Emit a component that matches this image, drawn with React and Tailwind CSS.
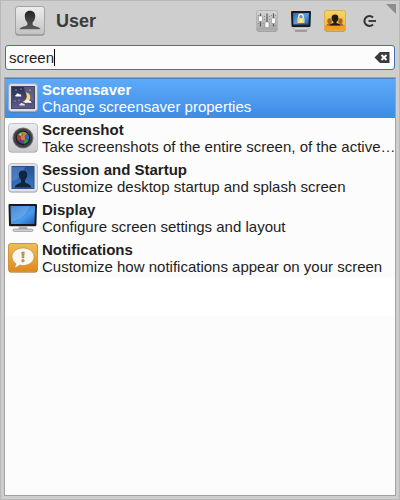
import React, { useState } from 'react';

function UserIcon() {
  return (
    <svg viewBox="0 0 30 30" className="w-[30px] h-[30px]">
      <defs>
        <linearGradient id="userPlate" x1="0" y1="0" x2="0" y2="1">
          <stop offset="0" stopColor="#eeeeee" />
          <stop offset="1" stopColor="#c2c2c2" />
        </linearGradient>
        <linearGradient id="userHead" x1="0" y1="0" x2="0" y2="1">
          <stop offset="0" stopColor="#252525" />
          <stop offset="1" stopColor="#5a5a5a" />
        </linearGradient>
      </defs>
      <rect x="0.5" y="1" width="29" height="28.5" rx="2.5" fill="#707070" />
      <rect x="0.5" y="0.5" width="29" height="28" rx="2.5" fill="url(#userPlate)" stroke="#a2a2a2" />
      <path d="M15 4.800c-3.600 0-5.400 2.300-5.200 5.800.1 2.500 1 4.600 2.600 5.900v2.200c-.5 1.800-6.900 1.600-7.900 4.500h21c-1-2.900-7.400-2.700-7.900-4.500v-2.200c1.600-1.300 2.500-3.400 2.600-5.900C20.400 7.100 18.600 4.800 15 4.800z" fill="url(#userHead)" />
    </svg>
  );
}

function SettingsIcon() {
  return (
    <svg viewBox="0 0 22 22" className="w-[22px] h-[22px]">
      <defs>
        <linearGradient id="mixPlate" x1="0" y1="0" x2="0" y2="1">
          <stop offset="0" stopColor="#d6d6d6" />
          <stop offset="1" stopColor="#a6a6a6" />
        </linearGradient>
      </defs>
      <rect x="0.5" y="1" width="21" height="20.5" rx="2" fill="#777" />
      <rect x="0.5" y="0.5" width="21" height="20" rx="2" fill="url(#mixPlate)" stroke="#b4b4b4" />
      <path d="M4.500 3.500v13M11 3.500v13M17.500 3.500v13" stroke="#5c5c5c" strokeWidth="1.200" />
      <path d="M2 5.500h1M2 13.500h1M6.500 13.500h1M8 6.500h1M13 6.500h1M8 9.500h1M13 9.500h1M15 5.500h1M19 5.500h1M19 15.500h1" stroke="#8a8a8a" />
      <g fill="#fff" stroke="#777" strokeWidth="0.5">
        <rect x="2.500" y="6" width="4" height="5.500" rx="1" />
        <rect x="9" y="12" width="4" height="5.500" rx="1" />
        <rect x="15.500" y="8" width="4" height="5.500" rx="1" />
      </g>
    </svg>
  );
}

function LockIcon() {
  return (
    <svg viewBox="0 0 22 22" className="w-[22px] h-[22px]">
      <defs>
        <linearGradient id="lockScreen" x1="0" y1="0" x2="1" y2="1">
          <stop offset="0" stopColor="#2467bb" />
          <stop offset="0.5" stopColor="#5a9fe6" />
          <stop offset="1" stopColor="#1b58aa" />
        </linearGradient>
      </defs>
      <path d="M2 1h18a1 1 0 0 1 1 1l-.5 14a1 1 0 0 1-1 1h-17a1 1 0 0 1-1-1L1 2a1 1 0 0 1 1-1z" fill="#191c20" />
      <path d="M3 3h16l-.4 11.500H3.400z" fill="url(#lockScreen)" />
      <path d="M8.700 8.500V6.500a2.300 2.300 0 0 1 4.600 0v2" fill="none" stroke="#ececec" strokeWidth="1.400" />
      <rect x="7.500" y="8" width="7" height="5" rx="0.5" fill="#f3d484" />
      <path d="M11 9.500V12" stroke="#fffbe8" strokeWidth="1.500" />
      <rect x="3.500" y="17.800" width="15" height="1.500" rx="0.5" fill="#f2f2f2" stroke="#888" strokeWidth="0.5" />
      <path d="M5 21h12" stroke="#6a6a6a" />
    </svg>
  );
}

function SwitchUserIcon() {
  return (
    <svg viewBox="0 0 22 22" className="w-[22px] h-[22px]">
      <defs>
        <linearGradient id="switchPlate" x1="0" y1="0" x2="0" y2="1">
          <stop offset="0" stopColor="#f9d467" />
          <stop offset="0.7" stopColor="#f2bc4a" />
          <stop offset="0.75" stopColor="#f39a1b" />
          <stop offset="1" stopColor="#f4a52c" />
        </linearGradient>
      </defs>
      <rect x="0.5" y="1" width="21" height="20.5" rx="2" fill="#a46f1d" />
      <rect x="0.5" y="0.5" width="21" height="20" rx="2" fill="url(#switchPlate)" stroke="#dcae55" />
      <g fill="#a5671f">
        <ellipse cx="5.5" cy="11" rx="2.2" ry="2.700" />
        <ellipse cx="16.5" cy="11" rx="2.2" ry="2.700" />
        <path d="M2.500 15.500c.4-1.800 1.700-2.200 3-2.200h11c1.300 0 2.600.4 3 2.200z" />
      </g>
      <path d="M11 4.500c-2.400 0-3.600 1.500-3.400 3.700.1 1.600.8 2.900 1.900 3.700v1c-.4 1-3.700.8-4.300 2.600h11.600c-.6-1.800-3.900-1.600-4.300-2.600v-1c1.100-.8 1.800-2.100 1.900-3.700.2-2.200-1-3.700-3.400-3.700z" fill="#241a12" />
    </svg>
  );
}

function LogoutIcon() {
  return (
    <svg viewBox="0 0 22 22" className="w-[22px] h-[22px]" fill="none" stroke="#333">
      <path d="M15 7.500a5 5 0 1 0 0 7" strokeWidth="2" />
      <path d="M10.500 11H18" strokeWidth="1.800" />
    </svg>
  );
}

function ScreensaverIcon() {
  return (
    <svg viewBox="0 0 30 30" className="w-[30px] h-[30px]">
      <defs>
        <linearGradient id="nightSky" x1="0" y1="0" x2="0" y2="1">
          <stop offset="0" stopColor="#2b2b52" />
          <stop offset="1" stopColor="#5f5c8c" />
        </linearGradient>
      </defs>
      <rect x="0.5" y="1" width="29" height="28.5" rx="3" fill="#68727f" />
      <rect x="0.5" y="0.5" width="29" height="28" rx="3" fill="#dcdee4" stroke="#9ba9ba" />
      <rect x="3.500" y="3.500" width="23" height="22" fill="url(#nightSky)" stroke="#4a4a62" />
      <path d="M16 4h10v14c-6-1-9-6-10-14z" fill="#8f8cae" opacity="0.45" />
      <path d="M18 9.500c3.500.5 5 3.500 4 6.500-1 3.200-5 4.500-7.500 2.500 3.500-.5 5.500-4.500 3.500-9z" fill="#f4dc75" />
      <g fill="#fff">
        <path d="M8 13.500c-1.200 0-1.200-1.600.2-1.600.3-1.700 2.500-1.900 3-.5 1.400-.3 2 .6 1.700 1.100 1 .2.800 1-.1 1z" />
        <path d="M17.500 19.800c-1.200 0-1.200-1.700.3-1.700.4-1.700 2.800-1.900 3.300-.4 1.500-.3 2.200.6 1.900 1.100 1 .2.800 1-.1 1z" />
        <path d="M12 22.500c-1 0-1-1.400.2-1.400.3-1.400 2.300-1.600 2.800-.4 1.300-.2 1.900.6 1.600 1 .8.200.6.800-.1.800z" opacity="0.85" />
        <circle cx="8" cy="7" r="0.6" />
        <circle cx="13" cy="6" r="0.5" />
        <circle cx="22" cy="7" r="0.6" />
        <circle cx="7" cy="18" r="0.5" />
        <circle cx="11" cy="17" r="0.5" />
      </g>
    </svg>
  );
}

function ScreenshotIcon() {
  return (
    <svg viewBox="0 0 30 30" className="w-[30px] h-[30px]">
      <defs>
        <linearGradient id="cameraPlate" x1="0" y1="0" x2="0" y2="1">
          <stop offset="0" stopColor="#ececef" />
          <stop offset="1" stopColor="#cbcad0" />
        </linearGradient>
      </defs>
      <rect x="0.5" y="1" width="29" height="28.5" rx="3" fill="#918f96" />
      <rect x="0.5" y="0.5" width="29" height="28" rx="3" fill="url(#cameraPlate)" stroke="#c4c3c8" />
      <circle cx="15" cy="15" r="10.5" fill="#77777a" />
      <circle cx="15" cy="15" r="9.5" fill="#3e3f42" />
      <circle cx="15" cy="15" r="7.2" fill="#1c1d22" />
      <path d="M15 15L9.500 12a6 6 0 0 1 4.500-3.200z" fill="#6b9a50" />
      <path d="M15 15l-1-6.200a6 6 0 0 1 5.500 1.900z" fill="#b8893a" />
      <path d="M15 15l4.500-4.300a6 6 0 0 1 1.300 6z" fill="#3566c0" />
      <path d="M15 15l5.800 1.700a6 6 0 0 1-5.300 4.200z" fill="#2f9456" />
      <path d="M15 15l.5 5.900a6 6 0 0 1-5.300-2.700z" fill="#5c3d91" />
      <path d="M15 15l-4.800 3.200a6 6 0 0 1-.7-6.200z" fill="#a8403f" />
      <circle cx="15" cy="15" r="2.200" fill="#e07a3c" />
      <circle cx="12.500" cy="11.500" r="1" fill="#d9e1d2" opacity="0.7" />
    </svg>
  );
}

function SessionIcon() {
  return (
    <svg viewBox="0 0 30 30" className="w-[30px] h-[30px]">
      <defs>
        <linearGradient id="sessionBlue" x1="0" y1="0" x2="0" y2="1">
          <stop offset="0" stopColor="#285294" />
          <stop offset="1" stopColor="#3978c3" />
        </linearGradient>
      </defs>
      <rect x="0.5" y="1" width="29" height="28.5" rx="3" fill="#8d9199" />
      <rect x="0.5" y="0.5" width="29" height="28" rx="3" fill="#e0e2e8" stroke="#c2c4ca" />
      <rect x="4" y="3.5" width="22" height="22" fill="url(#sessionBlue)" stroke="#28538f" />
      <path d="M4 4h13C15 12 10 17 4 18z" fill="#7bb0df" opacity="0.35" />
      <path d="M15 7.500c-2.900 0-4.400 1.900-4.200 4.600.1 2 .9 3.700 2.200 4.800v1.800c-.5 2-5.500 1.700-6.500 5.800h17c-1-4.100-6-3.800-6.500-5.800v-1.800c1.300-1.100 2.100-2.800 2.200-4.800.2-2.700-1.300-4.600-4.200-4.600z" fill="#102544" />
    </svg>
  );
}

function DisplayIcon() {
  return (
    <svg viewBox="0 0 30 30" className="w-[30px] h-[30px]">
      <defs>
        <linearGradient id="displayBlue" x1="0" y1="0" x2="1" y2="1">
          <stop offset="0" stopColor="#2468c2" />
          <stop offset="0.6" stopColor="#4a9aec" />
          <stop offset="1" stopColor="#1d5fb9" />
        </linearGradient>
      </defs>
      <path d="M1.500 1h26.500a1 1 0 0 1 1 1l-.6 20a1.200 1.200 0 0 1-1.200 1.200h-25A1.200 1.200 0 0 1 1 22L.5 2a1 1 0 0 1 1-1z" fill="#17191d" />
      <path d="M2.500 3h24.500l-.5 18H3z" fill="url(#displayBlue)" />
      <path d="M2.500 3h19C19 11 12 17 3 19z" fill="#a7d0f4" opacity="0.3" />
      <path d="M11 23.200h8l.5 3.300h-9z" fill="#b0b0b0" />
      <rect x="5" y="26" width="20" height="2.500" rx="1.200" fill="#cfcfcf" stroke="#888" strokeWidth="0.6" />
    </svg>
  );
}

function NotificationsIcon() {
  return (
    <svg viewBox="0 0 30 30" className="w-[30px] h-[30px]">
      <defs>
        <linearGradient id="notifyPlate" x1="0" y1="0" x2="0" y2="1">
          <stop offset="0" stopColor="#f0bd5a" />
          <stop offset="1" stopColor="#df8a1f" />
        </linearGradient>
      </defs>
      <rect x="0.5" y="1" width="29" height="28.5" rx="2.5" fill="#9b6218" />
      <rect x="0.5" y="0.5" width="29" height="28" rx="2.5" fill="url(#notifyPlate)" stroke="#cf9339" />
      <path d="M15 5C8.900 5 4 8.900 4 13.800c0 2.800 1.500 5.200 3.800 6.700.2 1.800-.6 3-1.900 4 2.300 0 4.300-.8 5.700-2.400 1.100.3 2.200.4 3.400.4 6.100 0 11-3.800 11-8.700S21.100 5 15 5z" fill="#fbf8f2" stroke="#bb7b23" strokeWidth="0.5" />
      <path d="M13.700 9h2.600l-.5 6h-1.600z" fill="#c9a04e" stroke="#8f7440" strokeWidth="0.5" />
      <circle cx="15" cy="17.800" r="1.300" fill="#c9a04e" stroke="#8f7440" strokeWidth="0.5" />
    </svg>
  );
}

const commands = [
  { name: 'All Settings', icon: SettingsIcon },
  { name: 'Lock Screen', icon: LockIcon },
  { name: 'Switch Users', icon: SwitchUserIcon },
  { name: 'Log Out', icon: LogoutIcon },
];

const launchers = [
  { name: 'Screensaver', description: 'Change screensaver properties', icon: ScreensaverIcon },
  { name: 'Screenshot', description: 'Take screenshots of the entire screen, of the active…', icon: ScreenshotIcon },
  { name: 'Session and Startup', description: 'Customize desktop startup and splash screen', icon: SessionIcon },
  { name: 'Display', description: 'Configure screen settings and layout', icon: DisplayIcon },
  { name: 'Notifications', description: 'Customize how notifications appear on your screen', icon: NotificationsIcon },
];

export default function App() {
  const [query, setQuery] = useState('screen');
  const [selected, setSelected] = useState('Screensaver');

  return (
    <div className="relative min-h-screen flex flex-col bg-[#cecece] border border-[#b8b8b8] px-[3px] pb-[3px] font-['Liberation_Sans',Arial,sans-serif] text-[#1e1e1e]">
      {/* Resize grip */}
      <svg viewBox="0 0 10 10" className="absolute top-[3px] right-[3px] w-[10px] h-[10px]">
        <path d="M0 0h10v10z" fill="#8e8e8e" />
      </svg>

      {/* Header */}
      <header className="flex items-center h-10 pl-[11px] pr-4">
        <UserIcon />
        <h1 className="flex-1 ml-[11px] text-[18px] leading-5 font-bold text-[#3c3c3c]">User</h1>
        <div className="flex gap-3">
          {commands.map(({ name, icon: Icon }) => (
            <button key={name} type="button" aria-label={name} className="w-[22px] h-[22px]">
              <Icon />
            </button>
          ))}
        </div>
      </header>

      {/* Search */}
      <div className="relative flex items-center mt-1 mx-px h-[25px] bg-[#fcfcfc] border border-[#4470b0] rounded-[3px] pl-[3px] pr-1">
        <input
          type="text"
          aria-label="Search"
          value={query}
          onChange={e => setQuery(e.target.value)}
          className="flex-1 min-w-0 h-full bg-transparent text-[15px] leading-5 outline-none caret-transparent"
        />
        {query === 'screen' && <span className="absolute left-[48px] top-[3px] w-px h-[17px] bg-black"></span>}
        <button type="button" aria-label="Clear" onClick={() => setQuery('')} className="w-4 h-4">
          <svg viewBox="0 0 16 16" className="w-4 h-4">
            <path d="M0.500 7.500L6 2h9.500v11H6z" fill="#3a3a3a" />
            <path d="M7.500 5l5 5M12.500 5l-5 5" stroke="#fff" strokeWidth="2" />
          </svg>
        </button>
      </div>

      {/* Results */}
      <main className="flex-1 mt-[7px] bg-[#fcfcfc] border border-[#a2a2a2]">
        <ul>
          {launchers.map(({ name, description, icon: Icon }) => (
            <li key={name}>
              <button
                type="button"
                onClick={() => setSelected(name)}
                className={`flex items-center w-full h-10 pl-[3px] gap-1 text-left ${selected === name ? 'bg-linear-to-b from-[#5fabf9] to-[#3d8ce6] text-white shadow-[inset_0_1px_0_#4a84c6]' : ''}`}
              >
                <span className="shrink-0">
                  <Icon />
                </span>
                <span className="flex-1 min-w-0 text-[15px] leading-[17px] whitespace-nowrap">
                  <span className="block font-bold">{name}</span>
                  <span className="block">{description}</span>
                </span>
              </button>
            </li>
          ))}
        </ul>
        <div className="h-[38px] bg-white"></div>
      </main>
    </div>
  );
}
